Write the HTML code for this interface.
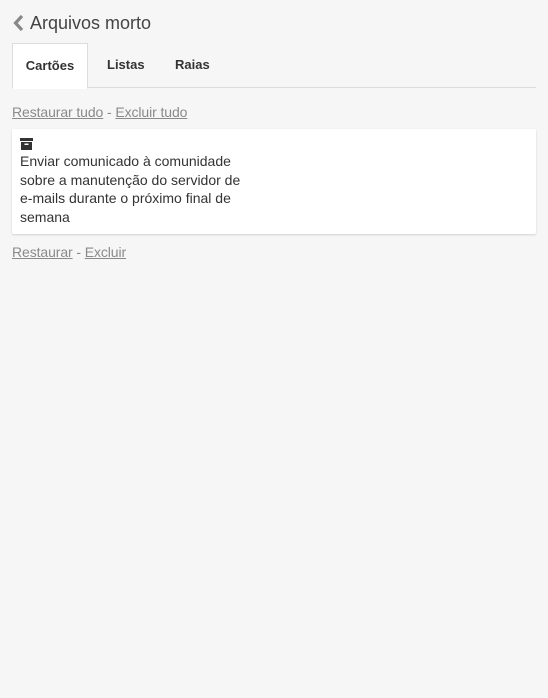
<!DOCTYPE html>
<html><head><style>
body{margin:0;background:#f6f6f6;font-family:"Liberation Sans",sans-serif;width:548px;height:698px;position:relative;overflow:hidden}
.t{position:absolute;left:30px;top:13px;font-size:18px;color:#444}
.tabs{position:absolute;left:12px;top:43px;width:524px;height:44px;border-bottom:1px solid #ddd}
.tab{position:absolute;top:0;height:44px;line-height:44px;font-size:13px;font-weight:bold;color:#333}
.act{left:0;width:74px;background:#fff;border:1px solid #ddd;border-bottom:1px solid #fff;text-align:center}
a{color:#8a8a8a;text-decoration:underline}
.l{position:absolute;left:12px;font-size:14px;color:#8a8a8a;letter-spacing:-0.1px}
.card{position:absolute;left:12px;top:129px;width:524px;height:105px;background:#fff;border-radius:2px;box-shadow:0 1px 2px rgba(0,0,0,.15)}
.txt{position:absolute;left:8px;top:23px;width:230px;font-size:14px;line-height:18.5px;color:#333}
</style></head><body>
<svg style="position:absolute;left:12px;top:14px" width="13" height="18" viewBox="0 0 13 18"><path d="M10 2 L3.5 9 L10 16" stroke="#888" stroke-width="3.2" fill="none"/></svg>
<div class="t">Arquivos morto</div>
<div class="tabs">
<div class="tab act">Cartões</div>
<div class="tab" style="left:95px">Listas</div>
<div class="tab" style="left:163px">Raias</div>
</div>
<div class="l" style="top:104px"><a>Restaurar tudo</a> - <a>Excluir tudo</a></div>
<div class="card">
<svg style="position:absolute;left:8px;top:9px" width="13" height="12" viewBox="0 0 13 12"><rect x="0" y="0" width="13" height="3" fill="#333"/><rect x="1" y="4" width="11" height="8" fill="#333"/><rect x="4.5" y="5.5" width="4" height="1.5" fill="#fff"/></svg>
<div class="txt">Enviar comunicado à comunidade sobre a manutenção do servidor de e-mails durante o próximo final de semana</div>
</div>
<div class="l" style="top:244px"><a>Restaurar</a> - <a>Excluir</a></div>
</body></html>
